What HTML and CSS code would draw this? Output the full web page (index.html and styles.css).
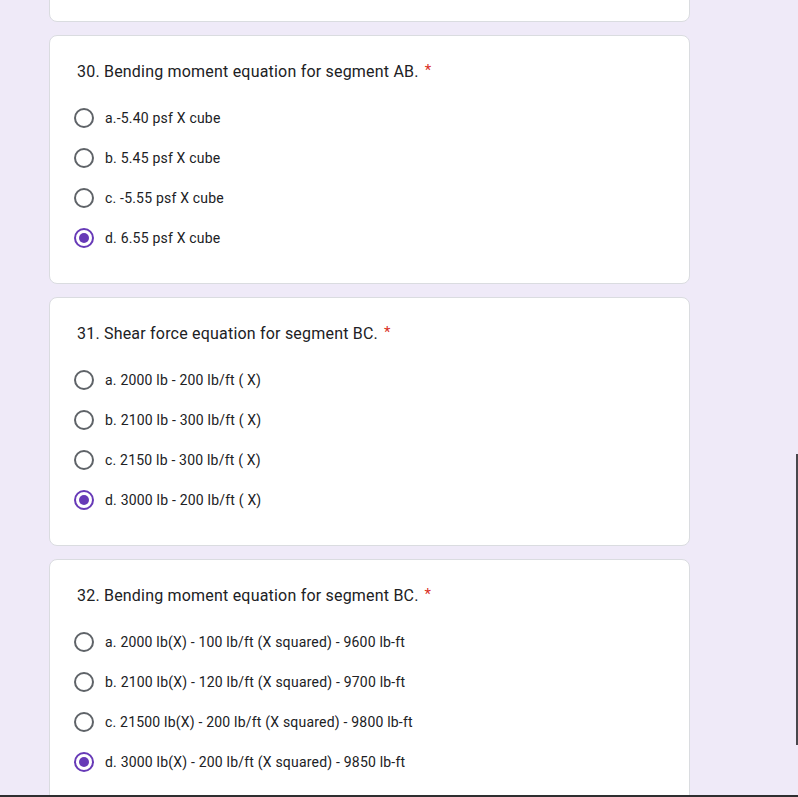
FILE: index.html
```html
<!DOCTYPE html>
<html>
<head>
<meta charset="utf-8">
<link rel="stylesheet" href="styles.css">
</head>
<body>
<div class="page">
  <div class="card stub"></div>

  <div class="card">
    <div class="title">30. Bending moment equation for segment AB.<span class="req">*</span></div>
    <div class="options">
      <div class="opt"><span class="radio"></span><span class="label">a.-5.40 psf X cube</span></div>
      <div class="opt"><span class="radio"></span><span class="label">b. 5.45 psf X cube</span></div>
      <div class="opt"><span class="radio"></span><span class="label">c. -5.55 psf X cube</span></div>
      <div class="opt"><span class="radio on"></span><span class="label">d. 6.55 psf X cube</span></div>
    </div>
  </div>

  <div class="card">
    <div class="title">31. Shear force equation for segment BC.<span class="req">*</span></div>
    <div class="options">
      <div class="opt"><span class="radio"></span><span class="label">a. 2000 lb - 200 lb/ft ( X)</span></div>
      <div class="opt"><span class="radio"></span><span class="label">b. 2100 lb - 300 lb/ft ( X)</span></div>
      <div class="opt"><span class="radio"></span><span class="label">c. 2150 lb - 300 lb/ft ( X)</span></div>
      <div class="opt"><span class="radio on"></span><span class="label">d. 3000 lb - 200 lb/ft ( X)</span></div>
    </div>
  </div>

  <div class="card">
    <div class="title">32. Bending moment equation for segment BC.<span class="req">*</span></div>
    <div class="options">
      <div class="opt"><span class="radio"></span><span class="label">a. 2000 lb(X) - 100 lb/ft (X squared) - 9600 lb-ft</span></div>
      <div class="opt"><span class="radio"></span><span class="label">b. 2100 lb(X) - 120 lb/ft (X squared) - 9700 lb-ft</span></div>
      <div class="opt"><span class="radio"></span><span class="label">c. 21500 lb(X) - 200 lb/ft (X squared) - 9800 lb-ft</span></div>
      <div class="opt"><span class="radio on"></span><span class="label">d. 3000 lb(X) - 200 lb/ft (X squared) - 9850 lb-ft</span></div>
    </div>
  </div>
</div>
<div class="edge-right"></div>
<div class="edge-bottom"></div>
</body>
</html>
```

FILE: styles.css
```css
html, body {
  margin: 0;
  padding: 0;
  background: #efeaf8;
  height: 100%;
  overflow: hidden;
}
body {
  font-family: Roboto, "Liberation Sans", sans-serif;
  color: #202124;
}
.page {
  width: 641px;
  margin-left: 49px;
  display: flex;
  flex-direction: column;
  gap: 13px;
}
.card {
  background: #fff;
  border: 1px solid #dadce0;
  border-radius: 8px;
  padding: 24px 24px 25px;
  box-sizing: border-box;
}
.card.stub {
  height: 100px;
  margin-top: -78px;
  padding: 0;
}
.title {
  font-size: 16px;
  line-height: 24px;
  height: 24px;
  padding-left: 3px;
  letter-spacing: 0.2px;
  margin-bottom: 14px;
  white-space: nowrap;
}
.req {
  color: #d93025;
  padding-left: 6px;
  font-size: 15px;
  line-height: 0;
  position: relative;
  top: -2px;
}
.options {
  display: flex;
  flex-direction: column;
}
.opt {
  height: 40px;
  display: flex;
  align-items: center;
  gap: 11px;
}
.radio {
  width: 20px;
  height: 20px;
  box-sizing: border-box;
  border: 2px solid #5f6368;
  border-radius: 50%;
  display: flex;
  align-items: center;
  justify-content: center;
  flex: none;
}
.radio.on {
  border-color: #673ab7;
}
.radio.on::after {
  content: "";
  width: 10px;
  height: 10px;
  border-radius: 50%;
  background: #673ab7;
}
.label {
  font-size: 14px;
  line-height: 20px;
  letter-spacing: 0.2px;
}
.edge-right {
  position: fixed;
  right: 0;
  top: 454px;
  width: 2px;
  height: 291px;
  background: #48474d;
}
.edge-bottom {
  position: fixed;
  left: 0;
  bottom: 0;
  width: 100%;
  height: 2px;
  background: #2e2e30;
}
```
